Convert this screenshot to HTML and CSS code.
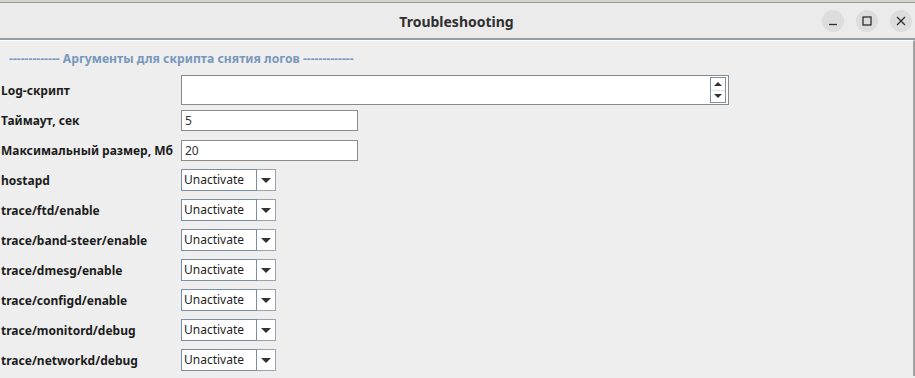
FILE: index.html
```html
<!DOCTYPE html>
<html>
<head>
  <title>Troubleshooting</title>
  <link rel="stylesheet" href="styles.css">
</head>

<body>
  <div class="desk"></div>

  <div class="window">
    <div class="titlebar">
      <span class="title">Troubleshooting</span>
      <div class="controls">
        <button class="ctl">
          <svg width="10" height="10" viewBox="0 0 10 10"><path d="M1 8.5h8" stroke="#2e2e2e" stroke-width="1.3"/></svg>
        </button>
        <button class="ctl">
          <svg width="10" height="10" viewBox="0 0 10 10"><rect x="1" y="1" width="8" height="8" fill="none" stroke="#2e2e2e" stroke-width="1.3"/></svg>
        </button>
        <button class="ctl">
          <svg width="10" height="10" viewBox="0 0 10 10"><path d="M1 1l8 8M9 1l-8 8" stroke="#2e2e2e" stroke-width="1.3"/></svg>
        </button>
      </div>
    </div>

    <div class="panel">
      <p class="section">------------- Аргументы для скрипта снятия логов -------------</p>

      <div class="form">
        <label>Log-скрипт</label>
        <div class="script-box">
          <div class="spinner">
            <span class="up"></span>
            <span class="down"></span>
          </div>
        </div>

        <label>Таймаут, сек</label>
        <div class="field">5</div>

        <label>Максимальный размер, Мб</label>
        <div class="field">20</div>

        <label>hostapd</label>
        <div class="combo"><span class="value">Unactivate</span><span class="arrow"></span></div>

        <label>trace/ftd/enable</label>
        <div class="combo"><span class="value">Unactivate</span><span class="arrow"></span></div>

        <label>trace/band-steer/enable</label>
        <div class="combo"><span class="value">Unactivate</span><span class="arrow"></span></div>

        <label>trace/dmesg/enable</label>
        <div class="combo"><span class="value">Unactivate</span><span class="arrow"></span></div>

        <label>trace/configd/enable</label>
        <div class="combo"><span class="value">Unactivate</span><span class="arrow"></span></div>

        <label>trace/monitord/debug</label>
        <div class="combo"><span class="value">Unactivate</span><span class="arrow"></span></div>

        <label>trace/networkd/debug</label>
        <div class="combo"><span class="value">Unactivate</span><span class="arrow"></span></div>
      </div>
    </div>
  </div>
</body>
</html>
```

FILE: styles.css
```css
* {
  margin: 0;
  padding: 0;
  box-sizing: border-box;
}

body {
  width: 915px;
  height: 378px;
  overflow: hidden;
  background: #eeeeee;
  font-family: "Noto Sans", "Open Sans", sans-serif;
}

.desk {
  height: 3px;
  background: #d6d3cc;
  border-bottom: 1px solid #9a9a9a;
}

.window {
  display: flex;
  flex-direction: column;
}

.titlebar {
  height: 37px;
  display: flex;
  align-items: center;
  justify-content: center;
  background: #ebebeb;
  border-bottom: 2px solid #939da7;
}

.title {
  font-size: 14px;
  font-weight: 700;
  color: #2f2f2f;
  margin-left: -2px;
  padding-top: 1px;
}

.controls {
  position: absolute;
  right: 3px;
  top: 10px;
  display: flex;
  gap: 12px;
}

.ctl {
  width: 22px;
  height: 22px;
  border: none;
  border-radius: 50%;
  background: #dddddd;
  display: flex;
  align-items: center;
  justify-content: center;
}

.panel {
  height: 336px;
  border-top: 1px solid #ffffff;
  border-right: 2px solid #a2a2a2;
  background: #eeeeee;
  padding-top: 10px;
}

.section {
  margin-left: 9px;
  font-size: 12.2px;
  line-height: 16px;
  font-weight: 700;
  color: #7898bc;
}

.form {
  margin-top: 8px;
  display: grid;
  grid-template-columns: 181px auto;
  grid-auto-rows: 30px;
  align-items: center;
  justify-items: start;
}

.form label {
  padding-left: 1px;
  padding-top: 1px;
  font-size: 12px;
  font-weight: 700;
  color: #1c1c1c;
  white-space: nowrap;
}

.script-box {
  width: 548px;
  height: 30px;
  background: #ffffff;
  border: 1px solid #8a8a8a;
  display: flex;
  justify-content: flex-end;
  align-items: center;
  padding-right: 2px;
}

.spinner {
  width: 16px;
  height: 26px;
  border: 1px solid #7f90a1;
  display: flex;
  flex-direction: column;
}

.spinner span {
  flex: 1;
  display: flex;
  align-items: center;
  justify-content: center;
}

.spinner .up {
  border-bottom: 1px solid #e4e4e4;
}

.spinner .up::after {
  content: "";
  border-left: 4px solid transparent;
  border-right: 4px solid transparent;
  border-bottom: 4px solid #333333;
}

.spinner .down::after {
  content: "";
  border-left: 4px solid transparent;
  border-right: 4px solid transparent;
  border-top: 4px solid #333333;
}

.field {
  width: 177px;
  height: 21px;
  background: #ffffff;
  border: 1px solid #8c8c8c;
  padding-left: 3px;
  font-size: 12px;
  line-height: 19px;
  color: #333333;
}

.combo {
  width: 95px;
  height: 22px;
  display: flex;
}

.combo .value {
  width: 76px;
  height: 22px;
  background: #ffffff;
  border: 1px solid #7b8ea3;
  padding-left: 2px;
  font-size: 12px;
  line-height: 19px;
  color: #1e1e1e;
}

.combo .arrow {
  flex: 1;
  background: #ffffff;
  border: 1px solid #9aa3ab;
  border-left: none;
  display: flex;
  align-items: center;
  justify-content: center;
}

.combo .arrow::after {
  content: "";
  border-left: 5px solid transparent;
  border-right: 5px solid transparent;
  border-top: 5px solid #333333;
}
```
